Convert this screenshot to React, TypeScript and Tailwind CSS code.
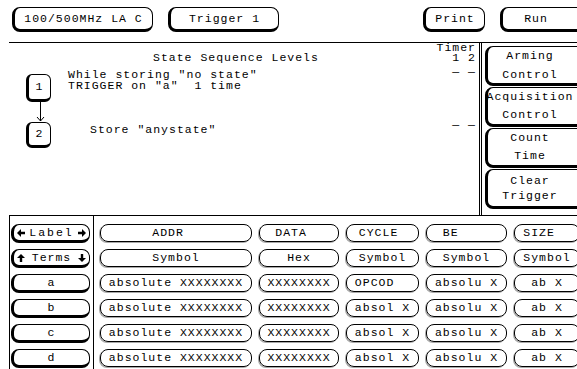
import type { ReactNode } from "react";

const heavy = "rounded-[8px] border border-black border-l-[3px] border-b-[3px]";
const thin = "rounded-[8px] border border-black shadow-[-1px_1px_0_#aaa]";

const columns = [
  { width: "w-[152px]", label: "ADDR  ", base: "Symbol" },
  { width: "w-[80px]", label: "DATA  ", base: "Hex" },
  { width: "w-[73px]", label: "CYCLE ", base: "Symbol" },
  { width: "w-[81px]", label: "BE    ", base: "Symbol" },
  { width: "w-[66px]", label: "SIZE  ", base: "Symbol" },
];

const terms = [
  { name: "a", values: ["absolute XXXXXXXX", "XXXXXXXX", "OPCOD  ", "absolu X", "ab X"] },
  { name: "b", values: ["absolute XXXXXXXX", "XXXXXXXX", "absol X", "absolu X", "ab X"] },
  { name: "c", values: ["absolute XXXXXXXX", "XXXXXXXX", "absol X", "absolu X", "ab X"] },
  { name: "d", values: ["absolute XXXXXXXX", "XXXXXXXX", "absol X", "absolu X", "ab X"] },
];

const sideButtons = [
  { lines: ["Arming", "Control"], leading: "leading-[19px]" },
  { lines: ["Acquisition", "Control"], leading: "leading-[18px]" },
  { lines: ["Count", "Time"], leading: "leading-[18px]" },
  { lines: ["Clear", "Trigger"], leading: "leading-[15px]" },
];

const Arrow = ({ dir }: { dir: "left" | "right" | "up" | "down" }) => {
  const rotate = { left: 0, up: 90, right: 180, down: 270 }[dir];
  return (
    <svg width="8" height="8" viewBox="0 0 8 8" style={{ transform: `rotate(${rotate}deg)` }}>
      <polygon points="0,4 4,0 4,2.8 8,2.8 8,5.2 4,5.2 4,8" fill="black" />
    </svg>
  );
};

const Cell = ({ className, children }: { className?: string; children: ReactNode }) => (
  <div className={`flex h-[18px] shrink-0 items-center justify-center whitespace-pre ${thin} ${className ?? ""}`}>
    {children}
  </div>
);

const SideKey = ({ children }: { children: ReactNode }) => (
  <div className={`flex h-[19px] w-[79px] shrink-0 items-center justify-center ${heavy}`}>{children}</div>
);

export default function App() {
  return (
    <div className="h-[369px] w-[577px] overflow-hidden bg-white font-['Liberation_Mono',monospace] text-[11.5px] tracking-[1px] text-black">
      {/* top row of keys */}
      <div className="flex h-[42px] items-start pl-[12px] pt-[7px]">
        <div className={`flex h-[25px] w-[141px] shrink-0 items-center justify-center ${heavy}`}>100/500MHz LA C</div>
        <div className={`ml-[15px] flex h-[25px] w-[111px] shrink-0 items-center justify-center ${heavy}`}>Trigger 1</div>
        <div className={`ml-[144px] flex h-[25px] w-[62px] shrink-0 items-center justify-center ${heavy}`}>Print</div>
        <div className={`ml-[15px] flex h-[25px] w-[100px] shrink-0 items-center justify-center pr-[30px] ${heavy}`}>
          Run
        </div>
      </div>

      <div className="ml-[9px] border-t border-black" />

      {/* sequence levels */}
      <div className="flex h-[172px]">
        <div className="flex w-[479px] shrink-0">
          <div className="flex flex-1 flex-col pt-[9px]">
            <div className="pl-[153px] leading-[12px]">State Sequence Levels</div>
            <div className="mt-[5px] flex">
              <div className="ml-[26px] mt-[5px] flex h-[28px] w-[25px] shrink-0 items-center justify-center rounded-[6px] border border-black border-b-[3px] border-l-[3px]">
                1
              </div>
              <div className="ml-[17px] leading-[11px]">
                <div>While storing "no state"</div>
                <div className="whitespace-pre">TRIGGER on "a"  1 time</div>
              </div>
            </div>
            <svg className="ml-[26px]" width="25" height="20" viewBox="0 0 25 20">
              <line x1="14.5" y1="0" x2="14.5" y2="19" stroke="black" strokeWidth="1" />
              <polyline points="11,15 14.5,19 18,15" fill="none" stroke="black" strokeWidth="1" />
            </svg>
            <div className="flex">
              <div className="ml-[26px] flex h-[26px] w-[25px] shrink-0 items-center justify-center rounded-[6px] border border-black border-b-[3px] border-l-[3px]">
                2
              </div>
              <div className="ml-[39px] mt-[2px] leading-[12px]">Store "anystate"</div>
            </div>
          </div>
          <div className="flex w-[44px] flex-col items-end pr-[3px] leading-[10px]">
            <div>Timer</div>
            <div className="whitespace-pre">1 2</div>
            <div className="mt-[4px] whitespace-pre">— —</div>
            <div className="mt-[43px] whitespace-pre">— —</div>
          </div>
        </div>
        <div className="border-l-[3px] border-double border-black" />
        <div className="flex w-[95px] flex-col gap-[1px] pl-[3px] pt-[3px]">
          {sideButtons.map((b) => (
            <div
              key={b.lines[0]}
              className={`flex h-[40px] w-[100px] shrink-0 flex-col items-center justify-center pr-[12px] ${b.leading} ${heavy}`}
            >
              {b.lines.map((l) => (
                <div key={l}>{l}</div>
              ))}
            </div>
          ))}
        </div>
      </div>

      {/* pattern terms */}
      <div className="ml-[9px] flex h-[154px] border-t border-black">
        <div className="flex w-[85px] shrink-0 flex-col gap-[6px] border-x border-black pl-[1px] pt-[8px]">
          <SideKey>
            <div className="flex w-full items-center justify-between px-[3px]">
              <Arrow dir="left" />
              <span className="tracking-[2px]">Label</span>
              <Arrow dir="right" />
            </div>
          </SideKey>
          <SideKey>
            <div className="flex w-full items-center justify-between px-[3px]">
              <Arrow dir="up" />
              <span>Terms</span>
              <Arrow dir="down" />
            </div>
          </SideKey>
          {terms.map((t) => (
            <SideKey key={t.name}>{t.name}</SideKey>
          ))}
        </div>
        <div className="flex flex-col gap-y-[7px] pl-[6px] pt-[8px]">
          <div className="flex gap-x-[7px]">
            {columns.map((c) => (
              <Cell key={c.label} className={c.width}>
                {c.label}
              </Cell>
            ))}
          </div>
          <div className="flex gap-x-[7px]">
            {columns.map((c) => (
              <Cell key={c.label} className={c.width}>
                {c.base}
              </Cell>
            ))}
          </div>
          {terms.map((t) => (
            <div key={t.name} className="flex gap-x-[7px]">
              {t.values.map((v, i) => (
                <Cell key={i} className={columns[i].width}>
                  {v}
                </Cell>
              ))}
            </div>
          ))}
        </div>
      </div>
    </div>
  );
}
